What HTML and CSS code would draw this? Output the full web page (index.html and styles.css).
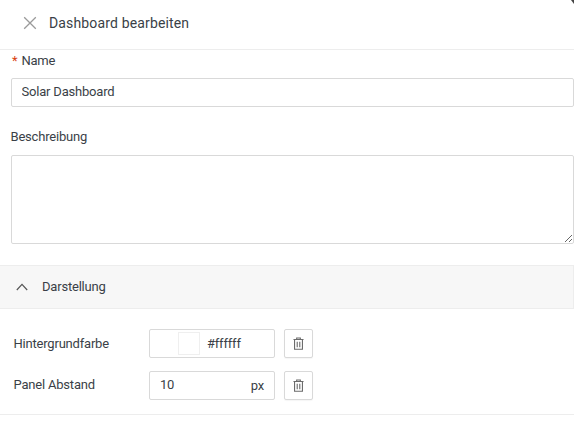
FILE: index.html
```
<!DOCTYPE html>
<html lang="de">
<head>
<meta charset="utf-8">
<title>Dashboard bearbeiten</title>
<link rel="stylesheet" href="styles.css">
</head>
<body>
<div class="drawer">
  <header class="drawer-header">
    <svg class="close-icon" viewBox="0 0 14 14" width="14" height="14"><path d="M1.2 1.2 12.8 12.8M12.8 1.2 1.2 12.8"/></svg>
    <h1 class="title">Dashboard bearbeiten</h1>
  </header>
  <form class="form">
    <div class="field field-name">
      <label class="label"><span class="required">*</span>Name</label>
      <input class="input" type="text" value="Solar Dashboard">
    </div>
    <div class="field field-desc">
      <label class="label label-desc">Beschreibung</label>
      <textarea class="textarea"></textarea>
    </div>
  </form>
  <section class="collapse">
    <div class="collapse-header">
      <svg class="chevron" viewBox="0 0 12 8" width="12" height="8"><path d="M.8 7 6 1.4 11.2 7"/></svg>
      <span class="collapse-title">Darstellung</span>
    </div>
    <div class="collapse-body">
      <div class="row">
        <span class="row-label">Hintergrundfarbe</span>
        <div class="control control-color"><span class="swatch"></span><span class="value">#ffffff</span></div>
        <button class="trash" type="button" aria-label="Löschen">
          <svg viewBox="0 0 12 14" width="11" height="13"><path d="M.5 2.7h11M4 2.7V1h4v1.7M1.7 2.7v10.6h8.6V2.7M4.6 5.2v5.8M7.4 5.2v5.8"/></svg>
        </button>
      </div>
      <div class="row">
        <span class="row-label row-label-up">Panel Abstand</span>
        <div class="control control-num"><span class="num">10</span><span class="unit">px</span></div>
        <button class="trash" type="button" aria-label="Löschen">
          <svg viewBox="0 0 12 14" width="11" height="13"><path d="M.5 2.7h11M4 2.7V1h4v1.7M1.7 2.7v10.6h8.6V2.7M4.6 5.2v5.8M7.4 5.2v5.8"/></svg>
        </button>
      </div>
    </div>
  </section>
</div>
<div class="corner"></div>
</body>
</html>
```
FILE: styles.css
```
* { box-sizing: border-box; }
html, body { margin: 0; padding: 0; background: #fff; overflow: hidden; }
body {
  width: 574px; height: 423px;
  font-family: Roboto, "Liberation Sans", sans-serif;
  font-size: 13px;
  color: #3a3f47;
  position: relative;
  letter-spacing: -0.2px;
}
.drawer-header {
  height: 50px;
  display: flex;
  align-items: center;
  padding: 0 0 3px 23px;
  border-bottom: 1px solid #ededed;
}
.close-icon { fill: none; stroke: #9a9a9a; stroke-width: 1.3; }
.title { margin: 0 0 0 12px; font-size: 14px; font-weight: 400; color: #3a3f47; line-height: 20px; letter-spacing: 0.15px; }
.form { padding-left: 11px; }
.label { display: block; font-size: 13px; line-height: 20px; }
.field-name .label { height: 28px; padding-top: 1px; }
.required { color: #d9400f; margin-right: 4px; margin-left: 1px; }
.input {
  display: block;
  width: 563px; height: 29px;
  padding: 0 9.5px 2px;
  border: 1px solid #d9d9d9;
  border-radius: 2px;
  font: 13px Roboto, sans-serif;
  letter-spacing: -0.2px;
  color: #3a3f47;
  outline: none;
}
.field-desc { padding-top: 20px; }
.label-desc { height: 28px; margin-left: -0.5px; }
.textarea {
  display: block;
  width: 563px; height: 89px;
  border: 1px solid #d9d9d9;
  border-radius: 2px;
  outline: none;
}
.collapse { margin-top: 21px; border-bottom: 1px solid #ededed; }
.collapse-header {
  height: 44px;
  display: flex;
  align-items: center;
  background: #f7f7f7;
  border-top: 1px solid #ededed;
  border-bottom: 1px solid #ededed;
  border-right: 1px solid #ededed;
  padding-left: 16px;
  gap: 14px;
  font-size: 13px;
}
.collapse-title { margin-top: -2px; }
.chevron { fill: none; stroke: #555; stroke-width: 1.2; margin-top: -1px; }
.collapse-body { padding: 20px 0 14px 14px; display: flex; flex-direction: column; gap: 13px; }
.row { display: flex; align-items: center; height: 29px; }
.row-label { width: 135px; margin-left: -0.5px; margin-right: 0.5px; }
.row-label-up { margin-top: -2px; }
.control {
  width: 126px; height: 29px;
  border: 1px solid #d9d9d9;
  border-radius: 2px;
  display: flex;
  align-items: center;
}
.control-color { padding-left: 28px; }
.swatch { width: 22px; height: 23px; border: 1px solid #efefef; background: #fff; }
.value { margin-left: 7px; }
.control-num { padding: 0 10px; justify-content: space-between; }
.num { margin-top: -2px; }
.trash {
  margin-left: 9px;
  width: 29px; height: 29px;
  padding: 0;
  border: 1px solid #d9d9d9;
  border-radius: 2px;
  background: #fff;
  box-shadow: 0 1px 1px rgba(0,0,0,.04);
  display: flex;
  align-items: center;
  justify-content: center;
}
.trash svg { fill: none; stroke: #6b6b6b; stroke-width: 1.2; }
.corner {
  position: absolute; top: 0; right: 0;
  width: 3px; height: 4px;
  background: #444;
  clip-path: polygon(0 0, 100% 0, 100% 100%);
}
```
